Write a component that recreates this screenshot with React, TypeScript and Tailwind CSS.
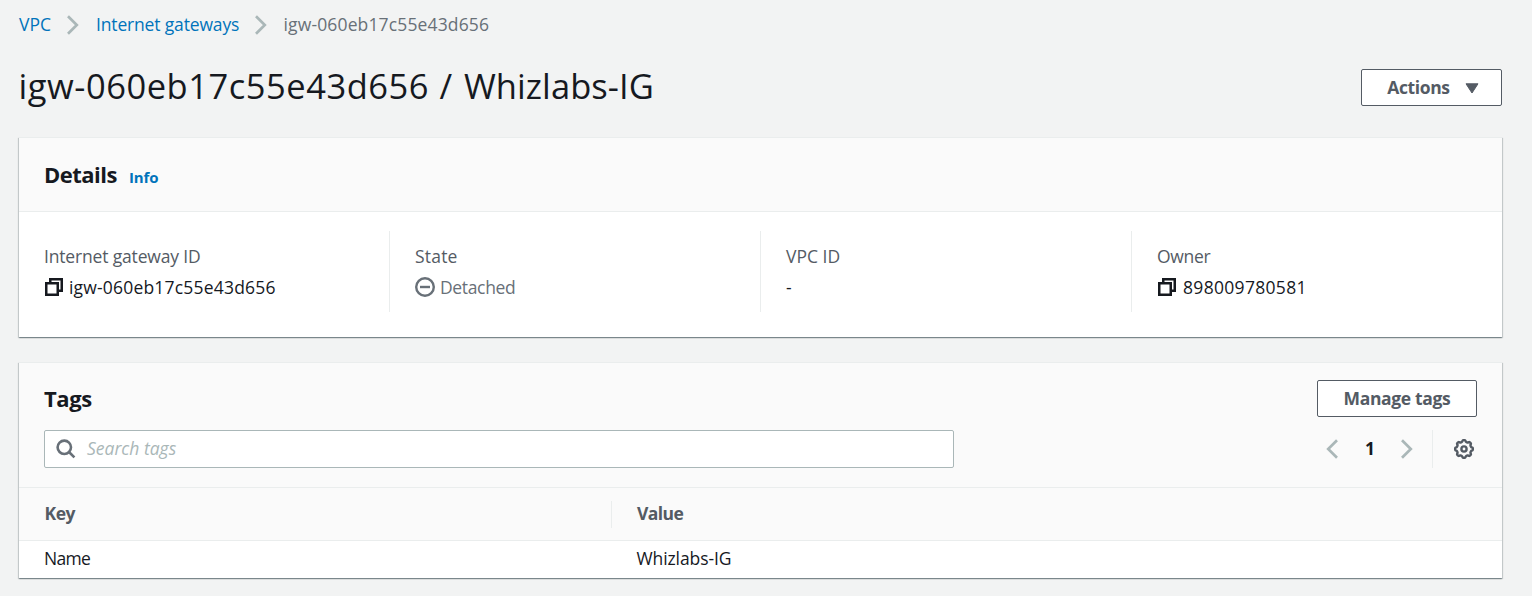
import type { ReactNode } from 'react';

function Chevron({ left = false, className = '' }: { left?: boolean; className?: string }) {
  return (
    <svg className={`h-5 w-3 shrink-0 ${className}`} viewBox="0 0 12 20" fill="none" stroke="#aab7b8" strokeWidth="2.7">
      <path d={left ? 'M11 1.2 2.2 10 11 18.8' : 'M1 1.2 9.8 10 1 18.8'} />
    </svg>
  );
}

function CopyIcon() {
  return (
    <svg className="mr-[6px] ml-px h-[18px] w-[18px] shrink-0" viewBox="0 0 18 18" fill="none" stroke="#16191f" strokeWidth="2.5">
      <path d="M1.25 5.25h11.5v11.5H1.25z" />
      <path d="M5.25 5V1.25h11.5v11.5H13" />
    </svg>
  );
}

function DetachedIcon() {
  return (
    <svg className="mr-[5px] h-5 w-5 shrink-0" viewBox="0 0 20 20" fill="none" stroke="#687078" strokeWidth="2.4">
      <circle cx="10" cy="10" r="8.8" />
      <path d="M5 10h10" />
    </svg>
  );
}

function SearchIcon() {
  return (
    <svg className="mr-[11px] h-5 w-5 shrink-0" viewBox="0 0 20 20" fill="none" stroke="#687078" strokeWidth="2.6">
      <circle cx="8.3" cy="8.3" r="6.7" />
      <path d="m13 13 5.4 5.4" />
    </svg>
  );
}

function GearIcon() {
  const points: string[] = [];
  for (let i = 0; i <= 96; i++) {
    const a = (i / 96) * Math.PI * 2;
    const r = 8.1 + 0.85 * Math.tanh(2 * Math.cos(8 * a));
    points.push(`${(10 + r * Math.sin(a)).toFixed(2)} ${(10 - r * Math.cos(a)).toFixed(2)}`);
  }
  return (
    <svg className="h-5 w-5 shrink-0" viewBox="0 0 20 20" fill="none" stroke="#545b64" strokeWidth="2.4" strokeLinejoin="round">
      <path d={`M${points.join('L')}Z`} />
      <circle cx="10" cy="10" r="2.6" />
    </svg>
  );
}

function Card({ children, className = '' }: { children: ReactNode; className?: string }) {
  return (
    <section
      className={`border-t border-[#eaeded] bg-white shadow-[0_1px_1px_0_rgba(0,28,36,0.3),1px_1px_1px_0_rgba(0,28,36,0.15),-1px_1px_1px_0_rgba(0,28,36,0.15)] ${className}`}
    >
      {children}
    </section>
  );
}

function Field({ label, labelClass, children, first = false }: { label: string; labelClass: string; children: ReactNode; first?: boolean }) {
  return (
    <div className={`h-[81px] pt-[13px] pl-[25px] ${first ? '' : 'border-l border-[#eaeded]'}`}>
      <div className={`leading-6 text-[#545b64] ${labelClass}`}>{label}</div>
      <div className="mt-[7px] flex h-6 items-center">{children}</div>
    </div>
  );
}

export default function App() {
  return (
    <div className="h-[596px] w-[1532px] overflow-hidden bg-[#f2f3f3] pr-[30px] pl-[19px] font-['Open_Sans','Noto_Sans',sans-serif] text-[17.5px] whitespace-nowrap text-[#16191f]">
      <nav className="flex h-9 items-end leading-6">
        <a className="w-8 text-[#0073bb]">VPC</a>
        <Chevron className="mb-px ml-4" />
        <a className="ml-[17px] w-[143px] tracking-[-0.158px] text-[#0073bb]">Internet gateways</a>
        <Chevron className="mb-px ml-4" />
        <span className="ml-[16.5px] tracking-[0.144px] text-[#687078]">igw-060eb17c55e43d656</span>
      </nav>

      <div className="mt-[33px] flex h-[37px] items-center justify-between">
        <h1 className="-ml-[0.5px] pb-[5px] text-[34.5px] leading-[37px] tracking-[0.511px]">
          <span className="tracking-[0.53px]">igw-060eb17c55e43d656</span>
          <span className="tracking-[1.4px]"> / </span>
          <span className="tracking-[0.08px]">Whizlabs-IG</span>
        </h1>
        <button className="flex h-[37px] w-[141px] items-center rounded-[2px] border border-[#545b64] bg-white pb-px pl-[25px] font-bold text-[#545b64]">
          <span className="w-[63px] tracking-[-0.38px]">Actions</span>
          <svg className="mt-[2px] ml-[15px] h-[11px] w-[14px]" viewBox="0 0 14 11" fill="#545b64" stroke="#545b64" strokeLinejoin="round">
            <path d="M1 .8h12L7 10z" />
          </svg>
        </button>
      </div>

      <Card className="mt-[31px] h-[200px]">
        <header className="flex h-[74px] items-center border-b border-[#eaeded] bg-[#fafafa] pt-[2px] pl-[25px]">
          <div className="flex items-baseline leading-6">
            <h2 className="w-[74px] text-[22px] font-bold tracking-[-0.508px]">Details</h2>
            <a className="ml-[11px] text-[15px] font-bold tracking-[-0.15px] text-[#0073bb]">Info</a>
          </div>
        </header>
        <div className="grid grid-cols-[370px_371px_371px_371px] pt-[19px]">
          <Field label="Internet gateway ID" labelClass="tracking-[-0.164px]" first>
            <CopyIcon />
            <span className="tracking-[0.19px]">igw-060eb17c55e43d656</span>
          </Field>
          <Field label="State" labelClass="tracking-[0.2px]">
            <DetachedIcon />
            <span className="tracking-[-0.347px] text-[#687078]">Detached</span>
          </Field>
          <Field label="VPC ID" labelClass="">
            -
          </Field>
          <Field label="Owner" labelClass="tracking-[-0.308px]">
            <CopyIcon />
            <span className="ml-px tracking-[0.312px]">898009780581</span>
          </Field>
        </div>
      </Card>

      <Card className="mt-[25px] h-[216px]">
        <div className="h-[125px] border-b border-[#eaeded] bg-[#fafafa] pr-[25px] pl-[25px]">
          <div className="flex h-[54px] items-end justify-between">
            <h2 className="text-[22px] leading-[37px] font-bold tracking-[-0.4px]">Tags</h2>
            <button className="h-[37px] w-40 rounded-[2px] border border-[#545b64] bg-white font-bold tracking-[-0.347px] text-[#545b64]">
              Manage tags
            </button>
          </div>
          <div className="mt-[13px] flex h-[38px] items-center justify-between">
            <div className="flex h-[38px] w-[910px] items-center rounded-[2px] border border-[#aab7b8] bg-white pl-[11px]">
              <SearchIcon />
              <span className="pb-px text-[#aab7b8] italic">Search tags</span>
            </div>
            <div className="flex h-[38px] items-center">
              <Chevron left />
              <span className="w-[63px] pb-[2px] pl-px text-center font-bold">1</span>
              <Chevron />
              <div className="ml-[19px] flex h-[38px] items-center border-l border-[#eaeded] pr-[3px] pl-[21px]">
                <GearIcon />
              </div>
            </div>
          </div>
        </div>
        <div className="grid h-[53px] grid-cols-[593px_1fr] items-center border-b border-[#eaeded] bg-[#fafafa] font-bold text-[#545b64]">
          <div className="flex h-[27px] items-center border-r border-[#eaeded] pb-px pl-[25.5px] tracking-[-0.48px]">Key</div>
          <div className="pb-px pl-[25px] tracking-[-0.6px]">Value</div>
        </div>
        <div className="grid h-[37px] grid-cols-[593px_1fr] items-center pb-[2px]">
          <div className="pl-[25px] tracking-[-0.7px]">Name</div>
          <div className="pl-[24.5px] tracking-[-0.1px]">Whizlabs-IG</div>
        </div>
      </Card>
    </div>
  );
}
